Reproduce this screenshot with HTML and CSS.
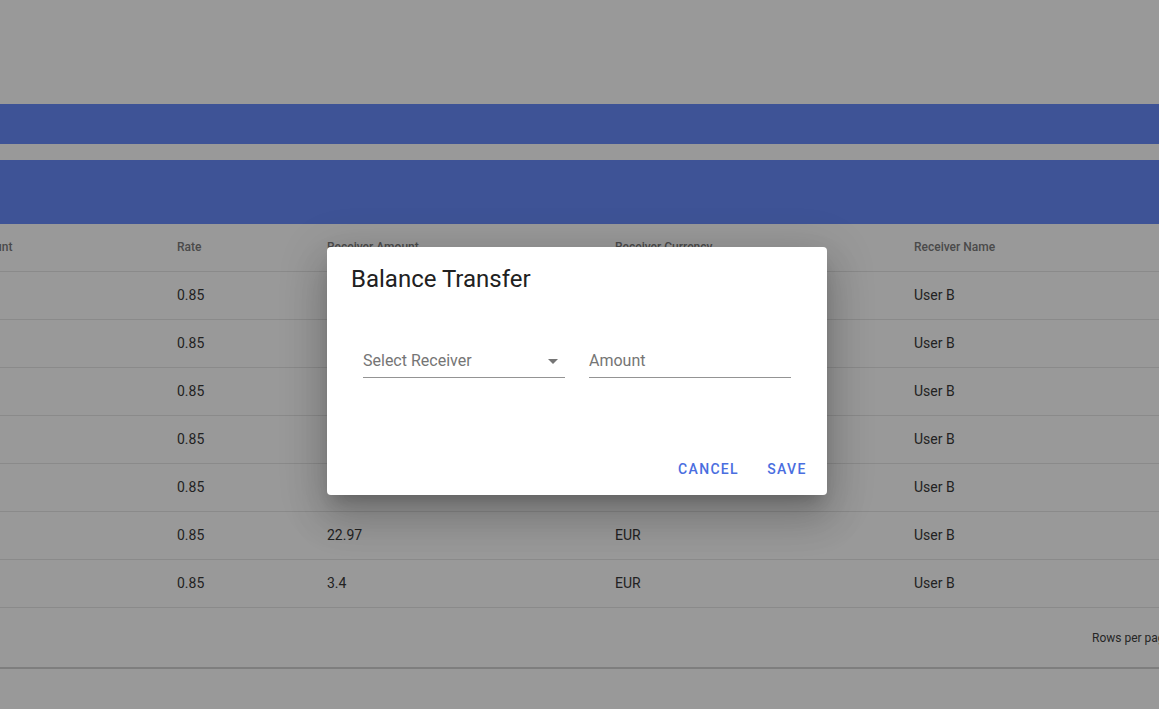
FILE: index.html
```html
<!DOCTYPE html>
<html lang="en">
<head>
<meta charset="utf-8">
<title>Balance Transfer</title>
<link rel="stylesheet" href="styles.css">
</head>
<body>
<div class="page">
  <div class="top-space"></div>
  <div class="bar bar-thin"></div>
  <div class="bar-gap"></div>
  <div class="bar bar-thick"></div>
  <div class="table-wrap">
    <div class="table">
      <div class="row head">
        <div class="cell">Amount</div>
        <div class="cell">Rate</div>
        <div class="cell">Receiver Amount</div>
        <div class="cell">Receiver Currency</div>
        <div class="cell">Receiver Name</div>
      </div>
      <div class="row"><div class="cell">27</div><div class="cell">0.85</div><div class="cell">22.95</div><div class="cell">EUR</div><div class="cell">User B</div></div>
      <div class="row"><div class="cell">10</div><div class="cell">0.85</div><div class="cell">8.5</div><div class="cell">EUR</div><div class="cell">User B</div></div>
      <div class="row"><div class="cell">20</div><div class="cell">0.85</div><div class="cell">17</div><div class="cell">EUR</div><div class="cell">User B</div></div>
      <div class="row"><div class="cell">5</div><div class="cell">0.85</div><div class="cell">4.25</div><div class="cell">EUR</div><div class="cell">User B</div></div>
      <div class="row"><div class="cell">15</div><div class="cell">0.85</div><div class="cell">12.75</div><div class="cell">EUR</div><div class="cell">User B</div></div>
      <div class="row"><div class="cell">27</div><div class="cell">0.85</div><div class="cell">22.97</div><div class="cell">EUR</div><div class="cell">User B</div></div>
      <div class="row"><div class="cell">4</div><div class="cell">0.85</div><div class="cell">3.4</div><div class="cell">EUR</div><div class="cell">User B</div></div>
    </div>
    <div class="pagination">
      <span class="caption">Rows per page:</span>
    </div>
  </div>
</div>

<div class="dialog" role="dialog" aria-labelledby="dlg-title">
  <div class="dialog-title" id="dlg-title">Balance Transfer</div>
  <div class="dialog-content">
    <div class="field select">
      <div class="input">
        <span class="placeholder">Select Receiver</span>
        <svg class="arrow" viewBox="0 0 24 24" width="24" height="24"><path d="M7 10l5 5 5-5z"/></svg>
      </div>
    </div>
    <div class="field">
      <div class="input">
        <span class="placeholder">Amount</span>
      </div>
    </div>
  </div>
  <div class="dialog-actions">
    <button class="btn">Cancel</button>
    <button class="btn">Save</button>
  </div>
</div>
</body>
</html>
```

FILE: styles.css
```css
html, body {
  margin: 0;
  padding: 0;
  height: 100%;
}
body {
  background: #999999;
  font-family: Roboto, "Liberation Sans", Arial, sans-serif;
  overflow: hidden;
}
.page {
  width: 100%;
  overflow: hidden;
}
.top-space {
  height: 104px;
}
.bar {
  background: #3e5396;
}
.bar-thin {
  height: 40px;
}
.bar-gap {
  height: 16px;
}
.bar-thick {
  height: 64px;
}
.table-wrap {
  overflow: hidden;
}
.table {
  margin-left: -30px;
  width: 1400px;
}
.row {
  display: grid;
  grid-template-columns: 207px 150px 288px 299px 1fr;
  height: 46px;
  padding-bottom: 1px;
  border-bottom: 1px solid #8a8a8a;
  align-items: center;
  font-size: 14px;
  color: #222222;
}
.row.head {
  font-size: 12px;
  font-weight: 500;
  color: #4a4a4a;
  padding-bottom: 1px;
  height: 46px;
}
.cell {
  white-space: nowrap;
}
.pagination {
  height: 59px;
  border-bottom: 2px solid #7e7e7e;
  display: flex;
  align-items: center;
  padding-left: 1092px;
}
.caption {
  font-size: 12px;
  color: #262626;
  white-space: nowrap;
}

/* Dialog (lies over the dimmed page) */
.dialog {
  position: absolute;
  left: 327px;
  top: 247px;
  width: 500px;
  background: #ffffff;
  border-radius: 4px;
  box-shadow: 0px 11px 15px -7px rgba(0,0,0,0.2),
              0px 24px 38px 3px rgba(0,0,0,0.14),
              0px 9px 46px 8px rgba(0,0,0,0.12);
  display: flex;
  flex-direction: column;
}
.dialog-title {
  padding: 16px 24px;
  height: 32px;
  line-height: 32px;
  font-size: 24px;
  font-weight: 400;
  color: #212121;
}
.dialog-content {
  padding: 19px 24px 65px;
  display: flex;
}
.field {
  flex: 1;
  margin: 0 12px;
  padding-top: 16px;
}
.input {
  position: relative;
  height: 32px;
  border-bottom: 1px solid #949494;
  box-sizing: border-box;
  display: flex;
  align-items: center;
  padding-bottom: 3px;
}
.placeholder {
  font-size: 16px;
  color: #757575;
  line-height: 19px;
}
.arrow {
  position: absolute;
  right: 0;
  top: 3px;
  fill: #757575;
}
.dialog-actions {
  padding: 8px;
  display: flex;
  justify-content: flex-end;
  gap: 8px;
}
.btn {
  font-family: Roboto, "Liberation Sans", Arial, sans-serif;
  font-size: 14px;
  font-weight: 500;
  text-transform: uppercase;
  letter-spacing: 0.095em;
  color: #4a6ee0;
  background: transparent;
  border: 0;
  padding: 6px 8px;
  min-width: 64px;
  height: 36px;
  border-radius: 4px;
  cursor: pointer;
}
```
